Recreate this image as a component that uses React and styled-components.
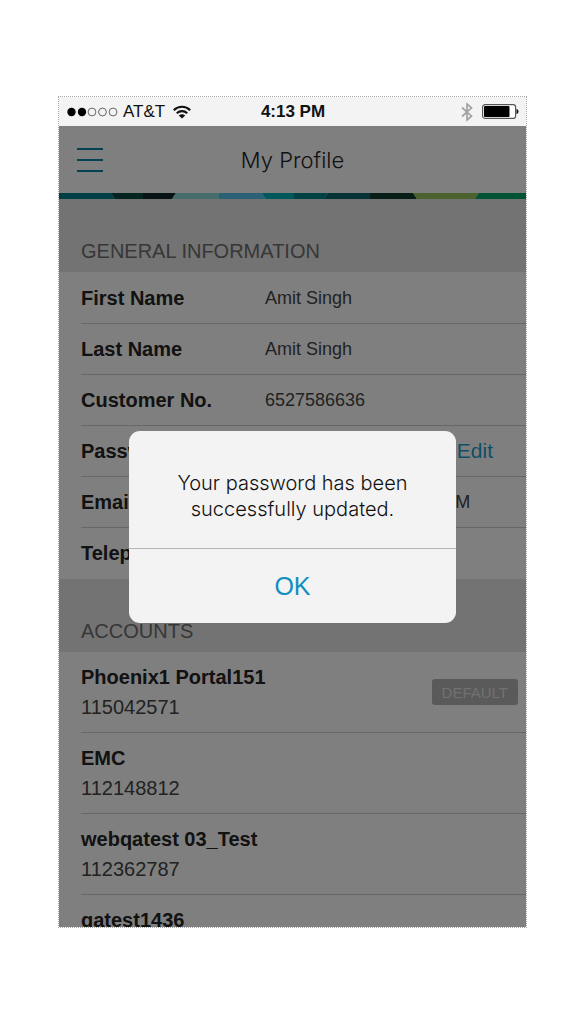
import React from "react";
import styled, { createGlobalStyle } from "styled-components";

const colors = {
	text: "#242424",
	value: "#444444",
	muted: "#6e6e6e",
	link: "#1f9fcc",
	line: "#cfcfcf",
	section: "#e6e6e6",
	status: "#f3f3f3",
};

const sans = `"Liberation Sans", Arial, sans-serif`;
const light = `Inter, "Liberation Sans", sans-serif`;

const GlobalStyle = createGlobalStyle`
	* {
		box-sizing: border-box;
	}
	body {
		margin: 0;
		background: #fff;
		font-family: ${sans};
	}
`;
const Page = styled.div`
	display: flex;
	height: 100vh;
	padding: 96px 58px;
`;
const Phone = styled.div`
	flex: 1;
	min-width: 0;
	display: flex;
	flex-direction: column;
	border: 1px dotted #a8a8a8;
	overflow: hidden;
`;
const StatusBar = styled.div`
	flex: none;
	display: grid;
	grid-template-columns: 1fr auto 1fr;
	align-items: center;
	height: 29px;
	padding: 0 7px 0 8px;
	background: ${colors.status};
	color: #111;
	font-size: 17px;
`;
const StatusGroup = styled.div`
	display: flex;
	align-items: center;
	justify-content: ${(props) => props.$align};
	gap: ${(props) => props.$gap};
`;
const Clock = styled.strong`
	font-weight: 700;
`;
const AppArea = styled.div`
	position: relative;
	flex: 1;
	min-height: 0;
	overflow: hidden;
	background: #fff;
`;
const Header = styled.header`
	display: grid;
	grid-template-columns: 1fr auto 1fr;
	align-items: center;
	height: 67px;
	padding: 0 18px;
`;
const MenuButton = styled.button`
	display: flex;
	width: 26px;
	padding: 0;
	border: 0;
	background: none;
`;
const Title = styled.h1`
	margin: 0;
	color: ${colors.text};
	font-family: ${light};
	font-size: 22px;
	font-weight: 300;
`;
const Stripe = styled.svg`
	display: block;
	width: 100%;
	height: 6px;
`;
const SectionTitle = styled.h2`
	display: flex;
	align-items: flex-end;
	height: 73px;
	margin: 0;
	padding: 0 22px 9px;
	background: ${colors.section};
	color: ${colors.muted};
	font-size: 20px;
	font-weight: 400;
	line-height: 24px;
`;
const Rows = styled.dl`
	margin: 0;
	padding: 1px 0 0 22px;
`;
const Row = styled.div`
	display: flex;
	align-items: center;
	height: 51px;
	border-bottom: 1px solid ${colors.line};
	&:last-child {
		border-bottom: 0;
	}
`;
const Label = styled.dt`
	flex: none;
	width: 184px;
	color: ${colors.text};
	font-size: 20px;
	font-weight: 700;
`;
const Value = styled.dd`
	flex: 1;
	display: flex;
	justify-content: space-between;
	align-items: center;
	margin: 0;
	padding-right: 33px;
	color: ${colors.value};
	font-size: 18px;
`;
const EditLink = styled.a`
	color: ${colors.link};
	font-size: 21px;
	text-decoration: none;
`;
const Accounts = styled.ul`
	margin: 0;
	padding: 0 0 0 22px;
	list-style: none;
`;
const Account = styled.li`
	display: flex;
	align-items: center;
	justify-content: space-between;
	height: 81px;
	padding-right: 8px;
	border-bottom: 1px solid ${colors.line};
`;
const AccountName = styled.div`
	color: ${colors.text};
	font-size: 20px;
	font-weight: 700;
	line-height: 30px;
`;
const AccountNumber = styled.div`
	color: ${colors.value};
	font-size: 20px;
	line-height: 30px;
`;
const Badge = styled.span`
	display: flex;
	align-items: center;
	height: 26px;
	padding: 0 10px;
	border-radius: 3px;
	background: #b4b4b4;
	color: #e2e2e2;
	font-size: 15px;
`;
const Overlay = styled.div`
	position: absolute;
	inset: 0;
	display: flex;
	align-items: center;
	justify-content: center;
	background: rgba(0, 0, 0, 0.5);
`;
const Dialog = styled.div`
	width: 70%;
	border-radius: 11px;
	background: ${colors.status};
	overflow: hidden;
`;
const Message = styled.p`
	margin: 0;
	padding: 39px 32px 26px;
	color: #111;
	font-family: ${light};
	font-size: 20px;
	font-weight: 300;
	line-height: 26px;
	text-align: center;
`;
const OkButton = styled.button`
	display: block;
	width: 100%;
	height: 75px;
	padding: 2px 0 0;
	border: 0;
	border-top: 1px solid #b5b5b5;
	background: none;
	color: #0f8fc0;
	font-family: ${sans};
	font-size: 25px;
`;

const info = [
	{ label: "First Name", value: "Amit Singh" },
	{ label: "Last Name", value: "Amit Singh" },
	{ label: "Customer No.", value: "6527586636" },
	{ label: "Password", value: "", edit: true },
	{ label: "Email", value: "AMIT.SINGH@ABC.COM" },
	{ label: "Telephone", value: "" },
];

const accounts = [
	{ name: "Phoenix1 Portal151", number: "115042571", isDefault: true },
	{ name: "EMC", number: "112148812" },
	{ name: "webqatest 03_Test", number: "112362787" },
	{ name: "qatest1436" },
];

const stripes = [
	{ points: "0,0 52,0 56,6 0,6", fill: "#008088" },
	{ points: "52,0 84,0 84,6 56,6", fill: "#08483e" },
	{ points: "84,0 117,0 113,6 84,6", fill: "#10262a" },
	{ points: "117,0 160,0 160,6 113,6", fill: "#8cdcd8" },
	{ points: "160,0 203,0 207,6 160,6", fill: "#54c2ea" },
	{ points: "203,0 235,0 235,6 207,6", fill: "#00b0b6" },
	{ points: "235,0 269,0 265,6 235,6", fill: "#008486" },
	{ points: "269,0 311,0 311,6 265,6", fill: "#0c686c" },
	{ points: "311,0 354,0 358,6 311,6", fill: "#103c2c" },
	{ points: "354,0 420,0 416,6 358,6", fill: "#98c45c" },
	{ points: "420,0 467,0 467,6 416,6", fill: "#00a868" },
];

function SignalDots() {
	return (
		<svg width="51" height="10" viewBox="0 0 51 10">
			{[4.5, 15, 25, 35.5, 46].map((cx, i) => (
				<circle
					key={cx}
					cx={cx}
					cy="5"
					r={i < 2 ? 4.2 : 3.9}
					fill={i < 2 ? "#000" : "none"}
					stroke={i < 2 ? "none" : "#444"}
					strokeWidth="0.8"
				/>
			))}
		</svg>
	);
}

function WifiIcon() {
	return (
		<svg width="21" height="14" viewBox="-3 0 21 14" fill="none" stroke="#111">
			<path d="M.8 5.200C5.400 .6 12.600 .6 17.200 5.200" strokeWidth="2.200" />
			<path d="M3.800 8.300c2.900-2.900 7.500-2.900 10.400 0" strokeWidth="2.200" />
			<path d="M9 13.400 5.800 10.600c1.800-1.700 4.600-1.700 6.400 0Z" fill="#111" stroke="none" />
		</svg>
	);
}

function BluetoothIcon() {
	return (
		<svg width="12" height="20" viewBox="0 0 12 20" fill="none" stroke="#a2a2a2">
			<path d="M1 5.500 10.500 14.200 6 18V2l4.500 3.800L1 14.500" strokeWidth="1.700" />
		</svg>
	);
}

function BatteryIcon() {
	return (
		<svg width="37" height="15" viewBox="0 0 37 15">
			<rect x="0.6" y="0.6" width="33" height="13.8" rx="2.5" fill="#fff" stroke="#555" strokeWidth="1.2" />
			<rect x="2" y="2" width="25.5" height="11" rx="1" fill="#000" />
			<path d="M34.500 5c2.700.4 2.700 4.600 0 5Z" fill="#111" />
		</svg>
	);
}

function App() {
	return (
		<Page>
			<GlobalStyle />
			<Phone>
				<StatusBar>
					<StatusGroup $align="flex-start" $gap="5px">
						<SignalDots />
						<span>AT&amp;T</span>
						<WifiIcon />
					</StatusGroup>
					<Clock>4:13 PM</Clock>
					<StatusGroup $align="flex-end" $gap="9px">
						<BluetoothIcon />
						<BatteryIcon />
					</StatusGroup>
				</StatusBar>
				<AppArea>
					<Header>
						<MenuButton type="button" aria-label="Menu">
							<svg width="26" height="24" viewBox="0 0 26 24" stroke="#0c86a4" strokeWidth="2">
								<path d="M0 1h26M0 12h26M0 23h26" />
							</svg>
						</MenuButton>
						<Title>My Profile</Title>
					</Header>
					<Stripe viewBox="0 0 467 6" preserveAspectRatio="none">
						{stripes.map((s) => (
							<polygon key={s.points} points={s.points} fill={s.fill} />
						))}
					</Stripe>
					<SectionTitle>GENERAL INFORMATION</SectionTitle>
					<Rows>
						{info.map((row) => (
							<Row key={row.label}>
								<Label>{row.label}</Label>
								<Value>
									<span>{row.value}</span>
									{row.edit && <EditLink href="#password">Edit</EditLink>}
								</Value>
							</Row>
						))}
					</Rows>
					<SectionTitle>ACCOUNTS</SectionTitle>
					<Accounts>
						{accounts.map((account) => (
							<Account key={account.name}>
								<div>
									<AccountName>{account.name}</AccountName>
									<AccountNumber>{account.number || "\u00a0"}</AccountNumber>
								</div>
								{account.isDefault && <Badge>DEFAULT</Badge>}
							</Account>
						))}
					</Accounts>
					<Overlay>
						<Dialog role="alertdialog" aria-describedby="message">
							<Message id="message">
								Your password has been
								<br />
								successfully updated.
							</Message>
							<OkButton type="button">OK</OkButton>
						</Dialog>
					</Overlay>
				</AppArea>
			</Phone>
		</Page>
	);
}

export default App;
